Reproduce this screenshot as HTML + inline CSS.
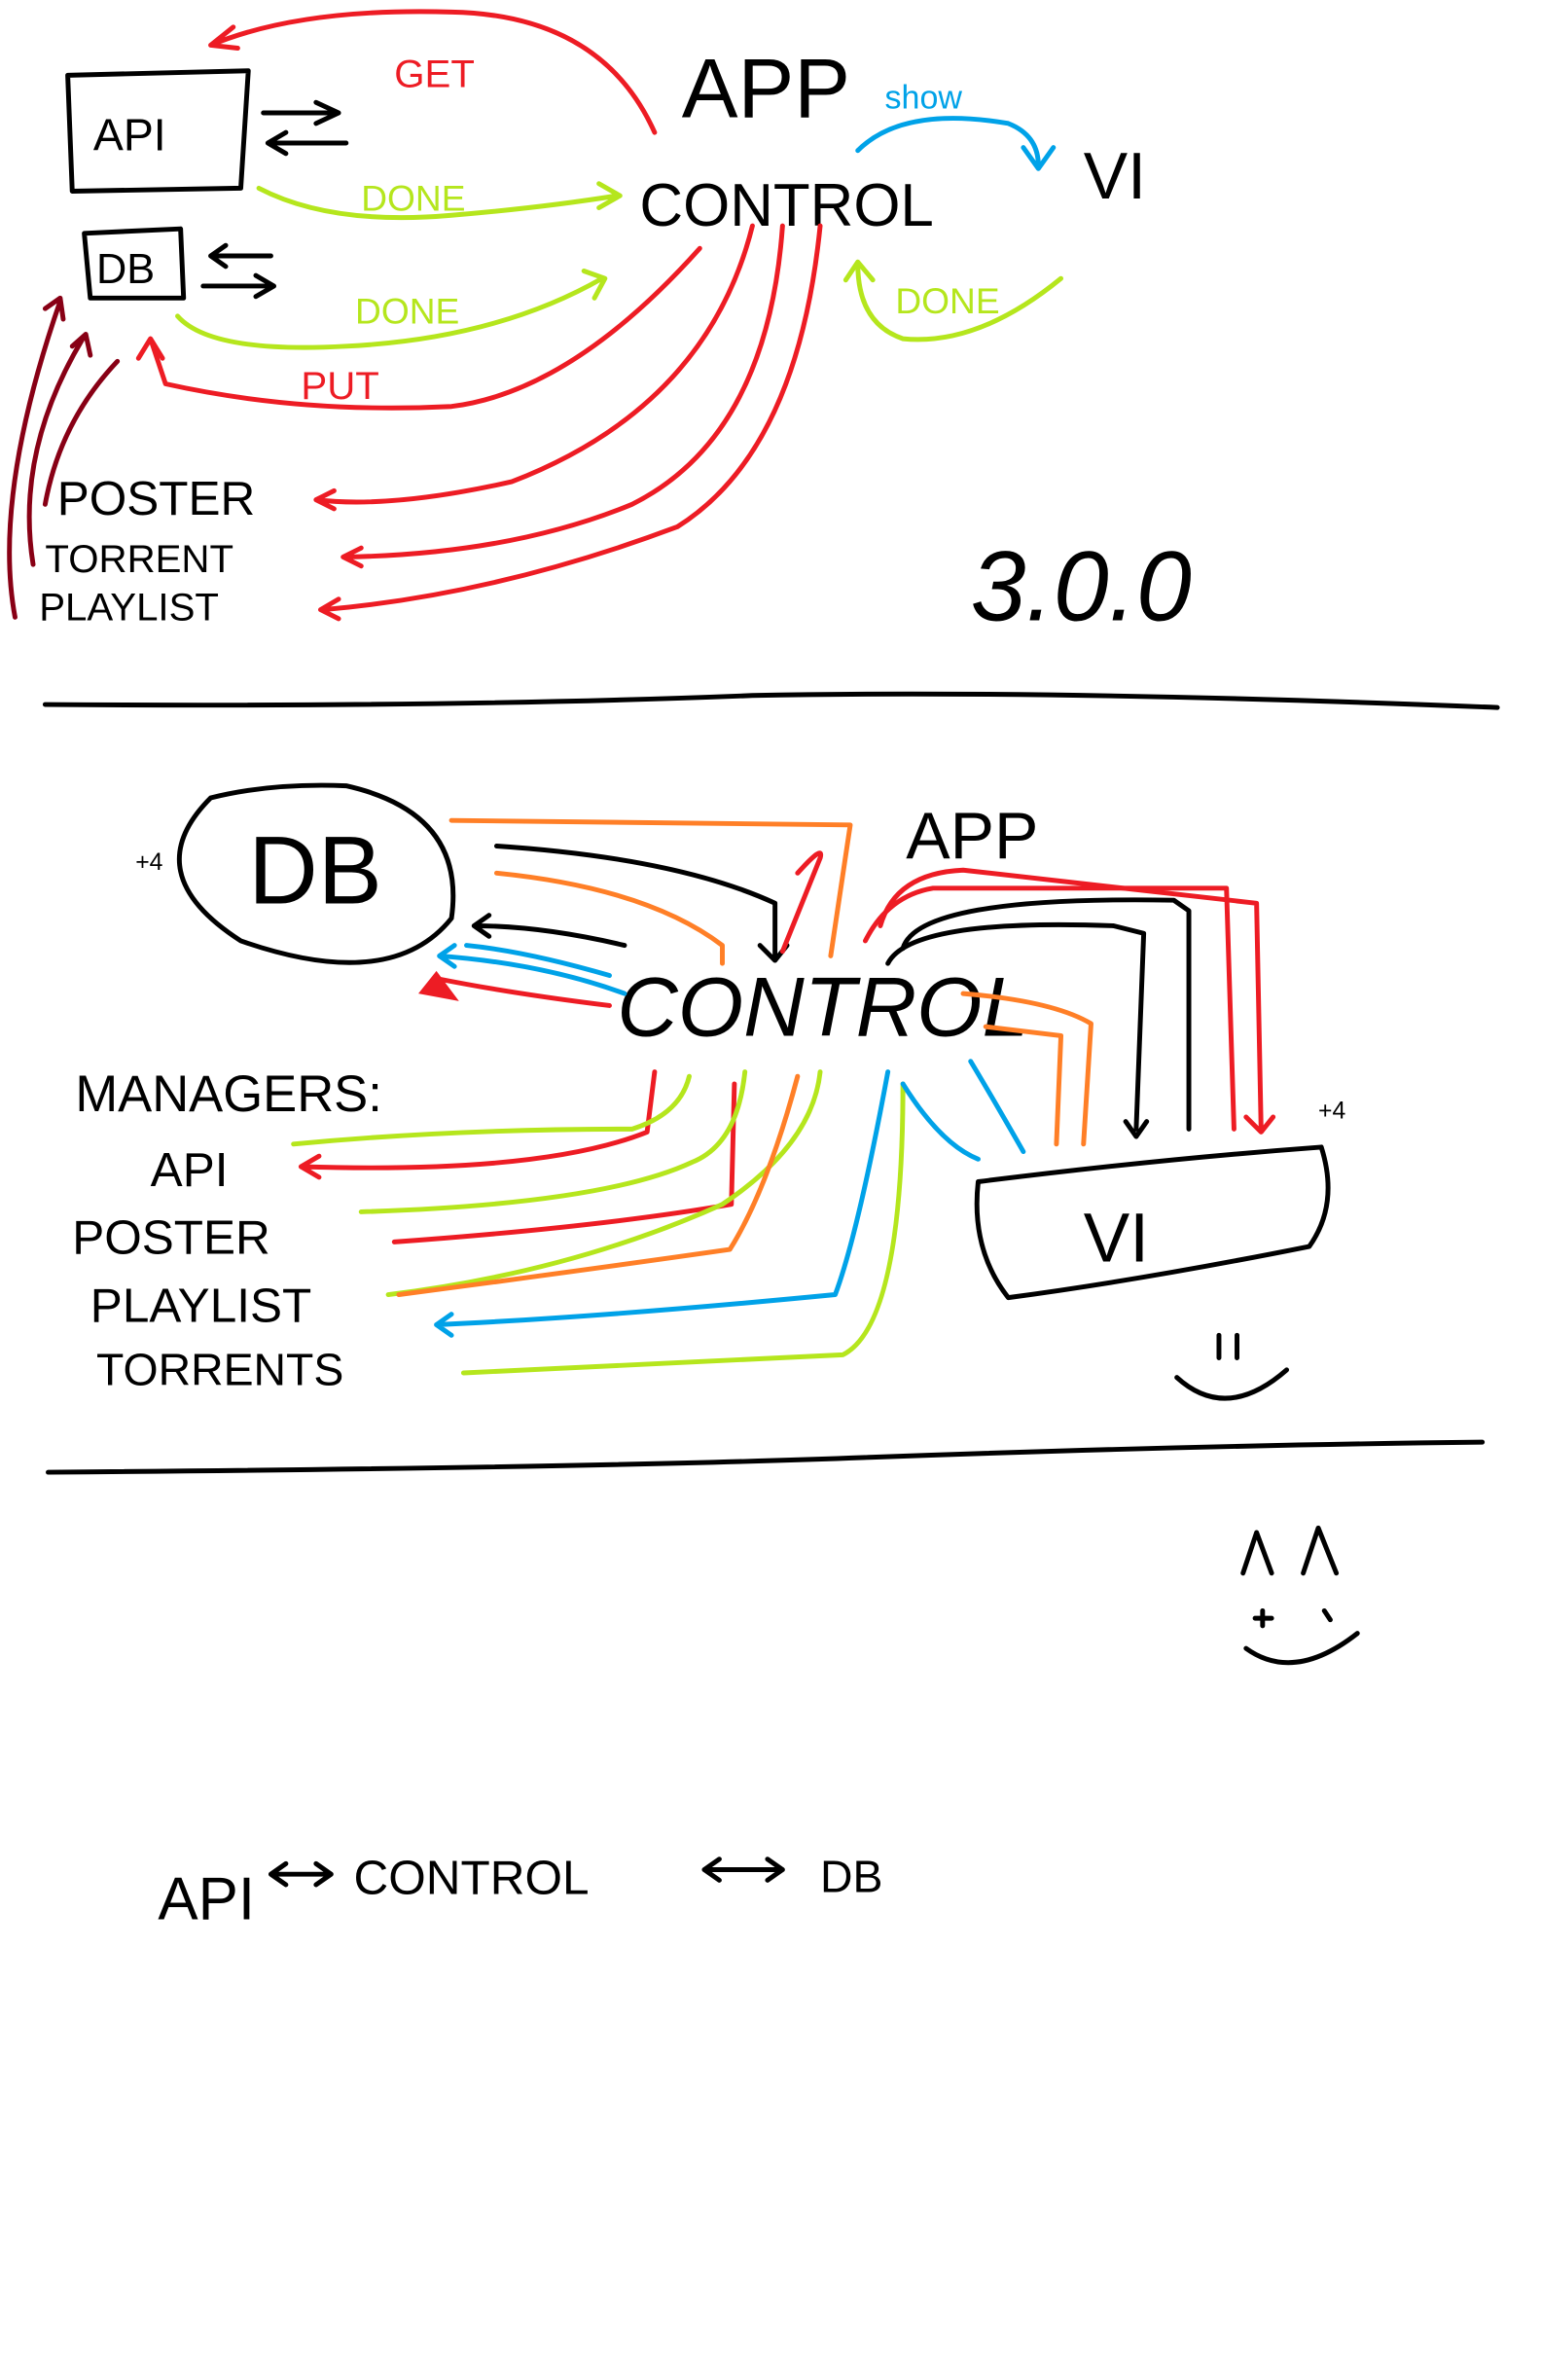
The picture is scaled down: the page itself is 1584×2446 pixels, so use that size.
<!DOCTYPE html>
<html><head><meta charset="utf-8"><style>
html,body{margin:0;padding:0;background:#fff;width:1584px;height:2446px;overflow:hidden}
svg{display:block}
text{font-family:"Liberation Sans",sans-serif}
</style></head><body>
<svg width="1584" height="2446" viewBox="0 0 1024 1581" preserveAspectRatio="none" fill="none" stroke-linecap="round" stroke-linejoin="round">
<rect width="1024" height="1581" fill="#fff" stroke="none"/>
<g stroke="#000" stroke-width="3.2">
<path d="M45 50 L165 47 L160 125 L48 127 Z"/>
<path d="M56 155 L120 152 L122 198 L60 198 Z"/>
<path d="M175 75 L225 75 M210 68 L225 75 L210 82 M230 95 L178 95 M190 88 L178 95 L190 102"/>
<path d="M140 170 L180 170 M150 163 L140 170 L150 177 M135 190 L182 190 M170 183 L182 190 L170 197"/>
<path d="M30 468 Q300 470 500 462 Q700 458 995 470"/>
<path d="M32 978 Q400 975 580 968 Q800 960 985 958"/>
</g>
<g fill="#000" stroke="none" font-size="30">
<text x="62" y="100">API</text>
<text x="64" y="188" font-size="28">DB</text>
<text x="453" y="78" font-size="56">APP</text>
<text x="425" y="150" font-size="40">CONTROL</text>
<text x="720" y="132" font-size="44">VI</text>
<text x="645" y="412" font-size="66" font-style="italic">3.0.0</text>
<text x="38" y="342" font-size="32">POSTER</text>
<text x="30" y="380" font-size="26">TORRENT</text>
<text x="26" y="412" font-size="26">PLAYLIST</text>
<text x="165" y="600" font-size="64">DB</text>
<text x="90" y="578" font-size="16">+4</text>
<text x="410" y="688" font-size="56" font-style="italic">CONTROL</text>
<text x="602" y="570" font-size="44">APP</text>
<text x="50" y="738" font-size="34">MANAGERS:</text>
<text x="100" y="788" font-size="32">API</text>
<text x="48" y="833" font-size="32">POSTER</text>
<text x="60" y="878" font-size="32">PLAYLIST</text>
<text x="64" y="920" font-size="30">TORRENTS</text>
<text x="720" y="838" font-size="46">VI</text>
<text x="876" y="743" font-size="16">+4</text>
<text x="105" y="1275" font-size="40">API</text>
<text x="235" y="1258" font-size="32">CONTROL</text>
<text x="545" y="1257" font-size="30">DB</text>
</g>
<g stroke="#000" stroke-width="3.2">
<path d="M180 1245 L220 1245 M190 1238 L180 1245 L190 1252 M210 1238 L220 1245 L210 1252"/>
<path d="M468 1242 L520 1242 M478 1235 L468 1242 L478 1249 M510 1235 L520 1242 L510 1249"/>
<path d="M140 530 Q90 580 160 625 Q260 660 300 610 Q310 540 230 522 Q180 520 140 530"/>
<path d="M650 785 Q770 770 878 762 Q890 800 870 828 Q760 850 670 862 Q645 830 650 785"/>
<path d="M782 915 Q815 945 855 910 M810 887 L810 902 M822 887 L822 902"/>
<path d="M826 1045 L835 1018 L845 1045 M866 1045 L876 1015 L888 1045 M828 1095 Q860 1118 902 1085 M834 1075 L845 1075 M839 1070 L839 1080 M880 1070 L884 1076"/>
<path d="M330 562 Q450 570 515 600 L515 635 M505 628 L515 638 L523 628"/>
<path d="M590 640 Q605 610 740 615 L760 620 L755 750 M748 745 L755 755 L762 745"/>
<path d="M600 630 Q610 595 780 598 L790 605 L790 750"/>
<path d="M415 628 Q360 615 315 615 M325 608 L315 615 L325 622"/>
</g>
<g stroke="#ed1c24" stroke-width="3.2">
<path d="M435 88 Q400 10 300 8 Q200 5 140 30 M155 18 L140 30 L158 32"/>
<path d="M465 165 Q380 260 300 270 Q200 275 110 255 L100 225 M92 238 L100 225 L108 238"/>
<path d="M500 150 Q470 270 340 320 Q260 338 210 332 M222 326 L210 332 L222 338"/>
<path d="M520 150 Q510 290 420 335 Q340 368 230 370 M240 364 L228 370 L240 376"/>
<path d="M545 150 Q530 300 450 350 Q330 395 215 405 M225 398 L213 405 L225 411"/>
<path d="M520 632 L545 570 Q548 560 530 580"/>
<path d="M585 615 Q595 580 640 578 L835 600 L838 750 M828 742 L838 752 L846 742"/>
<path d="M575 625 Q590 595 620 590 L815 590 L820 750"/>
<path d="M405 668 Q340 660 290 650"/>
<path d="M435 712 L430 752 Q360 780 200 775 M212 768 L200 775 L212 782"/>
<path d="M488 720 L486 800 Q400 815 262 825"/>
</g>
<path d="M290 645 L305 665 L278 660 Z" fill="#ed1c24" stroke="none"/>
<g fill="#ed1c24" stroke="none" font-size="26"><text x="262" y="58">GET</text><text x="200" y="265">PUT</text></g>
<g stroke="#b5e61d" stroke-width="3.2">
<path d="M172 125 Q220 150 300 143 Q360 138 410 130 M398 122 L412 130 L398 138"/>
<path d="M118 210 Q140 235 230 230 Q330 225 400 185 M388 180 L402 185 L395 198"/>
<path d="M705 185 Q650 230 600 225 Q570 215 570 175 M562 186 L570 174 L580 186"/>
<path d="M195 760 Q300 750 420 750 Q452 740 458 715"/>
<path d="M240 805 Q400 800 460 772 Q490 760 495 712"/>
<path d="M258 860 Q380 845 480 800 Q540 760 545 712"/>
<path d="M308 912 Q450 905 560 900 Q600 880 600 720"/>
</g>
<g fill="#b5e61d" stroke="none" font-size="24"><text x="240" y="140">DONE</text><text x="236" y="215">DONE</text><text x="595" y="208">DONE</text></g>
<g stroke="#00a2e8" stroke-width="3.2">
<path d="M570 100 Q600 70 670 82 Q690 90 690 110 M680 98 L690 112 L700 98"/>
<path d="M415 660 Q360 640 292 635 M302 628 L292 635 L302 642"/>
<path d="M405 648 Q350 632 310 628"/>
<path d="M590 712 Q570 820 555 860 Q400 875 290 880 M300 873 L290 880 L300 887"/>
<path d="M600 720 Q625 760 650 770"/>
<path d="M680 765 Q660 730 645 705"/>
</g>
<g fill="#00a2e8" stroke="none" font-size="22"><text x="588" y="72">show</text></g>
<g stroke="#ff7f27" stroke-width="3.2">
<path d="M300 545 L565 548 L552 635"/>
<path d="M330 580 Q430 590 480 628 L480 640"/>
<path d="M640 660 Q700 665 725 680 L720 760"/>
<path d="M655 682 L705 688 L702 760"/>
<path d="M530 715 Q510 790 485 830 Q380 845 265 860"/>
</g>
<g stroke="#880015" stroke-width="3.2">
<path d="M10 410 Q-5 330 40 200 M30 205 L40 198 L42 212"/>
<path d="M22 375 Q10 300 55 225 M48 230 L57 222 L60 236"/>
<path d="M30 335 Q40 280 78 240"/>
</g>
</svg>
</body></html>
